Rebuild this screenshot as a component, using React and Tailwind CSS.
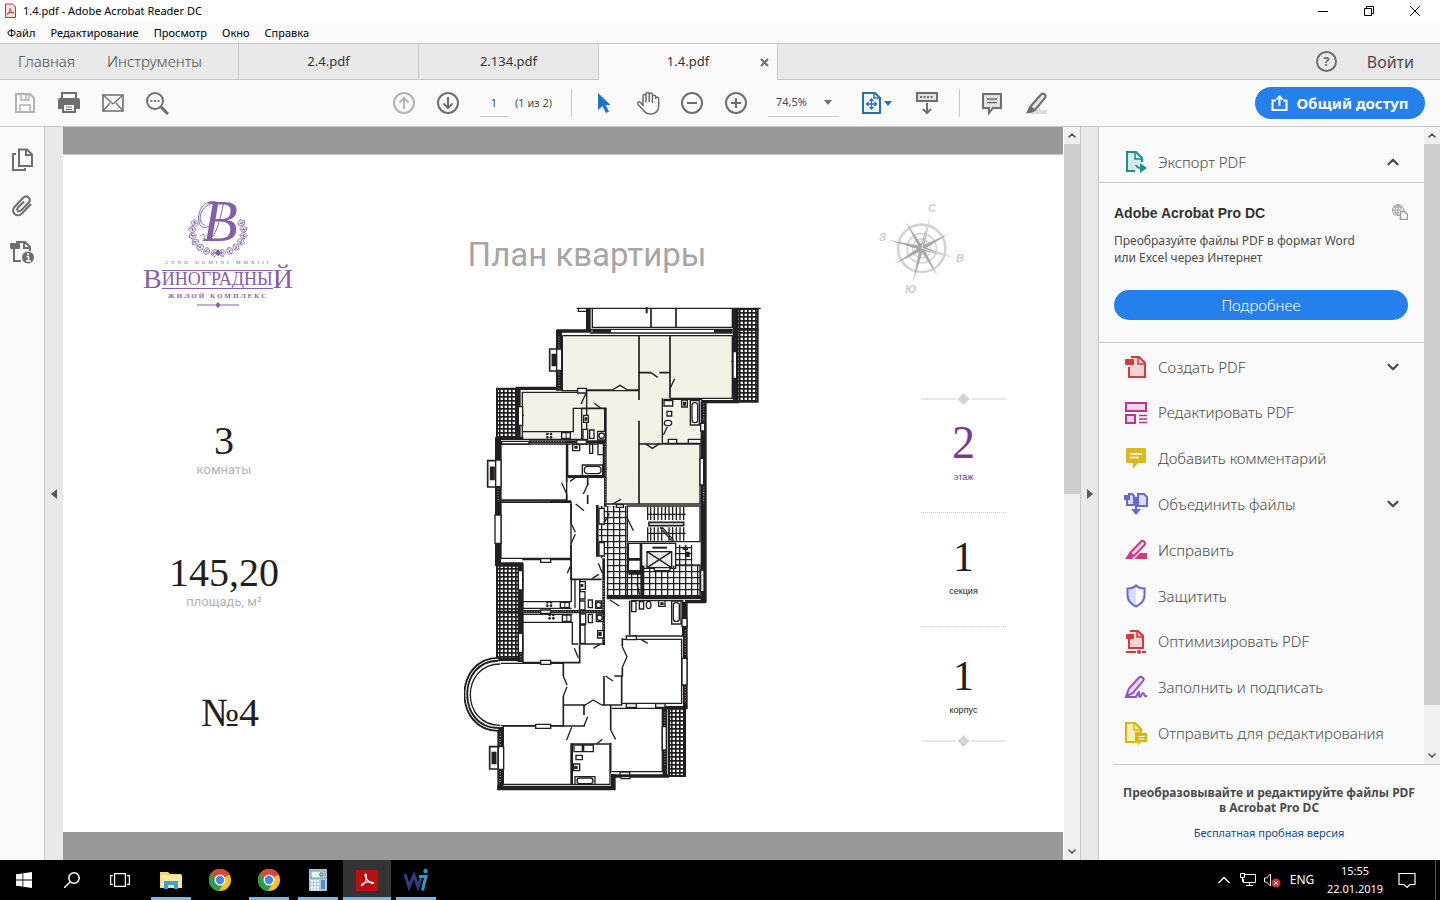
import React, { useState } from 'react';
import { ChevronDown, ChevronUp } from 'lucide-react';

const MENU = ['Файл', 'Редактирование', 'Просмотр', 'Окно', 'Справка'];
const TABS = ['2.4.pdf', '2.134.pdf', '1.4.pdf'];

const INK = '#231f20';

function Icon({ size = 24, children, ...props }) {
  return (
    <svg width={size} height={size} viewBox="0 0 24 24" fill="none" stroke="currentColor" strokeWidth="2" aria-hidden="true" {...props}>
      {children}
    </svg>
  );
}

function ToolButton({ label, className = '', children }) {
  return (
    <button type="button" aria-label={label} className={`flex size-6 shrink-0 items-center justify-center text-[#6e6e6e] ${className}`}>
      {children}
    </button>
  );
}

/* ---------- window chrome ---------- */

function TitleBar() {
  return (
    <header className="flex h-[22px] shrink-0 items-center bg-white pr-0.5 pl-1">
      <svg width="12" height="16" viewBox="0 0 12 16" aria-hidden="true">
        <path d="M1.5 1h7l3 3v10.500h-10z" fill="#fbe3e3" stroke="#c8332f" />
        <path d="M3 11.500c2-1 3.500-4 3-6.500M6 6c.4 2 2 4 4 4M3 11c2-1.600 5-2 7-1.200" fill="none" stroke="#d6302b" />
      </svg>
      <h1 className="ml-[7px] text-[11px] leading-4 text-black">1.4.pdf - Adobe Acrobat Reader DC</h1>
      <div className="ml-auto flex text-black">
        <button type="button" aria-label="Свернуть" className="flex w-[46px] justify-center">
          <svg width="10" height="10" viewBox="0 0 10 10" stroke="currentColor"><path d="M0 5.500h10" /></svg>
        </button>
        <button type="button" aria-label="Восстановить" className="flex w-[46px] justify-center">
          <svg width="10" height="10" viewBox="0 0 10 10" fill="none" stroke="currentColor"><path d="M.5 2.500h7v7h-7zM2.500 2V.5h7v7H8" /></svg>
        </button>
        <button type="button" aria-label="Закрыть" className="flex w-[46px] justify-center">
          <svg width="10" height="10" viewBox="0 0 10 10" stroke="currentColor"><path d="M0 0l10 10M10 0L0 10" /></svg>
        </button>
      </div>
    </header>
  );
}

function MenuBar() {
  return (
    <nav className="flex h-[21px] shrink-0 items-center gap-[15px] bg-[#fafafa] px-[7px]">
      {MENU.map((item) => (
        <button key={item} type="button" className="text-[11px] leading-4 text-black">{item}</button>
      ))}
    </nav>
  );
}

function TabBar() {
  return (
    <div className="flex h-[37px] shrink-0 border-y border-[#c8c8c8] bg-[#e9e9e9] text-[#4b4b4b]">
      <div className="flex w-[238px] items-center gap-8 pl-[18px] text-[15px] font-light">
        <button type="button">Главная</button>
        <button type="button">Инструменты</button>
      </div>
      {TABS.map((tab, i) => {
        const active = i === TABS.length - 1;
        return (
          <div
            key={tab}
            className={`relative flex w-[180px] items-center justify-center border-l border-[#c8c8c8] text-[13px] text-[#323232] ${active ? '-mb-px border-r bg-[#fafafa]' : ''}`}
          >
            <button type="button">{tab}</button>
            {active && (
              <button type="button" aria-label="Закрыть вкладку" className="absolute right-2 text-[#6e6e6e]">
                <svg width="9" height="9" viewBox="0 0 9 9" stroke="currentColor" strokeWidth="2"><path d="M1 1l7 7M8 1L1 8" /></svg>
              </button>
            )}
          </div>
        );
      })}
      <div className="ml-auto flex items-center gap-[30px] pr-[26px]">
        <button type="button" aria-label="Справка" className="flex size-[21px] items-center justify-center rounded-full border-2 border-[#6e6e6e] text-[13px] font-bold text-[#6e6e6e]">?</button>
        <button type="button" className="text-[16px]">Войти</button>
      </div>
    </div>
  );
}

function Toolbar() {
  const [page, setPage] = useState('1');
  return (
    <div className="grid h-[47px] shrink-0 grid-cols-[1fr_auto_1fr] items-center border-b border-[#c8c8c8] bg-[#fafafa] text-[#4b4b4b]">
      <div className="flex gap-5 pl-[13px]">
        <ToolButton label="Сохранить" className="opacity-50">
          <Icon><path d="M3 3h14l4 4v14H3z" /><path d="M8 3v6h8V3M13 4v4M7 21v-7h10v7" strokeWidth="1.500" /></Icon>
        </ToolButton>
        <ToolButton label="Печать">
          <Icon>
            <path d="M5 8V2h14v6" />
            <path d="M1 9a2 2 0 012-2h18a2 2 0 012 2v9h-4v-4H5v4H1z" fill="currentColor" stroke="none" />
            <path d="M6 14v7h12v-7" /><path d="M9 16h6M9 18.500h6" strokeWidth="1" />
          </Icon>
        </ToolButton>
        <ToolButton label="Отправить по почте">
          <Icon><path d="M2 4h20v16H2z" strokeWidth="1.600" /><path d="M2 4l10 9 10-9M2 20l7-8M22 20l-7-8" strokeWidth="1.300" /></Icon>
        </ToolButton>
        <ToolButton label="Найти">
          <Icon><circle cx="10" cy="10" r="8" /><path d="M16 16l7 7" strokeWidth="3" /><path d="M5.500 10h2M9 10h2M12.500 10h2" /></Icon>
        </ToolButton>
      </div>

      <div className="flex items-center gap-5">
        <ToolButton label="Предыдущая страница" className="opacity-50">
          <Icon><circle cx="12" cy="12" r="10" /><path d="M12 18V7M7.500 11.500L12 7l4.500 4.500" /></Icon>
        </ToolButton>
        <ToolButton label="Следующая страница">
          <Icon><circle cx="12" cy="12" r="10" /><path d="M12 6v11M7.500 12.500L12 17l4.500-4.500" /></Icon>
        </ToolButton>
        <div className="flex w-[71px] items-center gap-[7px] text-[11px] whitespace-nowrap">
          <input
            aria-label="Номер страницы"
            value={page}
            onChange={(e) => setPage(e.target.value)}
            className="h-[27px] w-7 shrink-0 border-b border-[#c8c8c8] bg-transparent text-center outline-none"
          />
          <span>(1 из 2)</span>
        </div>
        <span className="h-7 w-px bg-[#c8c8c8]" />
        <ToolButton label="Выделение">
          <Icon stroke="none"><path d="M6 2v17l4.500-4 3.500 7 3-1.500-3.500-6.500h5z" fill="#1f72c9" /></Icon>
        </ToolButton>
        <ToolButton label="Рука">
          <Icon strokeWidth="1.500" strokeLinejoin="round">
            <path d="M7 15V5a1.500 1.500 0 013 0v6.500M10 11V3a1.600 1.600 0 013.200 0v8M13.200 11V3.500a1.600 1.600 0 013.200 0V12M16.400 12V6a1.600 1.600 0 013.300 0v-.5 2a1.500 1.500 0 013 .5v7c0 5-3.500 8-8 8-4 0-6-1.500-8-4.500L2 13.500c-1-2 .8-3.500 2.500-2L7 14.500" />
          </Icon>
        </ToolButton>
        <ToolButton label="Уменьшить">
          <Icon><circle cx="12" cy="12" r="10" /><path d="M7 12h10" /></Icon>
        </ToolButton>
        <ToolButton label="Увеличить">
          <Icon><circle cx="12" cy="12" r="10" /><path d="M7 12h10M12 7v10" /></Icon>
        </ToolButton>
        <div className="flex h-[27px] w-[71px] items-center border-b border-[#c8c8c8] pr-[7px] pl-2">
          <select aria-label="Масштаб" defaultValue="74,5%" className="w-full appearance-none bg-transparent text-[11px] outline-none">
            <option>74,5%</option>
            <option>100%</option>
          </select>
          <svg width="8" height="5" viewBox="0 0 8 5" className="shrink-0" fill="#6e6e6e"><path d="M0 0h8L4 5z" /></svg>
        </div>
        <button type="button" aria-label="По размеру страницы" className="flex w-9 items-center gap-px text-[#1f72b8]">
          <Icon>
            <path d="M4 2h12l5 5v15H4z" /><path d="M15 2v5h6" strokeWidth="1.500" />
            <path d="M12.500 8v10M7.500 13h10M10.500 10l2-2 2 2M10.500 16l2 2 2-2M9.500 11l-2 2 2 2M15.500 11l2 2-2 2" strokeWidth="1.300" />
          </Icon>
          <svg width="8" height="5" viewBox="0 0 8 5" fill="currentColor"><path d="M0 0h8L4 5z" /></svg>
        </button>
        <ToolButton label="Панель инструментов">
          <Icon><path d="M2 2h20v8H2z" fill="#e2e2e2" /><path d="M5 6h14" strokeDasharray="2 1.500" /><path d="M12 12v10M8 18l4 4 4-4" /></Icon>
        </ToolButton>
        <span className="h-7 w-px bg-[#c8c8c8]" />
        <ToolButton label="Комментарий">
          <Icon><path d="M3 3h18v14h-8l-4 5v-5H3z" fill="#e2e2e2" /><path d="M7 8h10M7 11.500h10" strokeWidth="1.300" /></Icon>
        </ToolButton>
        <ToolButton label="Выделить текст">
          <Icon>
            <path d="M9 19h14v4H5z" fill="#dcdcdc" stroke="none" />
            <path d="M6 16L17 3.500c2-2 6 0 4 3.500L11 19z" fill="#e2e2e2" />
            <path d="M5 16l6 4-3 1.500-6 1z" fill="currentColor" stroke="none" />
          </Icon>
        </ToolButton>
      </div>

      <div className="flex justify-end pr-[15px]">
        <button type="button" className="flex h-8 w-[170px] items-center justify-center gap-2 rounded-full bg-[#2680eb] text-[15px] font-bold whitespace-nowrap text-white">
          <svg width="17" height="17" viewBox="0 0 17 17" fill="none" stroke="currentColor" strokeWidth="2" aria-hidden="true">
            <path d="M5 5.500H1.500V15h14V5.500H12M8.500 11V2M5.500 4.500l3-3 3 3" />
          </svg>
          Общий доступ
        </button>
      </div>
    </div>
  );
}

function LeftRail() {
  return (
    <aside className="flex shrink-0 border-r border-[#c8c8c8] bg-[#fafafa]">
      <div className="flex w-11 flex-col items-center gap-[22px] pt-[21px]">
        <ToolButton label="Миниатюры страниц">
          <Icon><path d="M9 1.500h8l5 5V18H9z" /><path d="M16 1.500V7h6M6 6H3v16h12v-2" /></Icon>
        </ToolButton>
        <ToolButton label="Вложения">
          <Icon><path d="M21 10l-9 9.500c-5 5-12-1.500-7.500-6.500L13 4c4-4 9 1 5.500 5L11 16.500c-2.500 2-5-.5-3-3l6-6" /></Icon>
        </ToolButton>
        <ToolButton label="Сведения">
          <Icon>
            <path d="M4 9v12h7M6 2h9l5 5v4M14 2v6h6" />
            <rect x="0" y="3" width="10" height="6" rx="1" fill="currentColor" stroke="none" />
            <circle cx="18" cy="17.500" r="6" fill="currentColor" stroke="none" />
            <path d="M16.500 16.500h2v4.500M16 21h5M18 13v2" stroke="#fff" strokeWidth="1.500" />
          </Icon>
        </ToolButton>
      </div>
    </aside>
  );
}

function CollapseStrip({ label, side }) {
  return (
    <button type="button" aria-label={label} className={`flex shrink-0 items-center justify-center bg-[#e9e9e9] ${side === 'right' ? 'w-[19px] border-x border-[#c8c8c8]' : 'w-[18px]'}`}>
      <svg width="6" height="10" viewBox="0 0 6 10" fill="#5a5a5a">
        <path d={side === 'right' ? 'M0 0l6 5-6 5z' : 'M6 0L0 5l6 5z'} />
      </svg>
    </button>
  );
}

function ScrollBar({ thumb }) {
  return (
    <div className="flex w-4 shrink-0 flex-col items-center bg-[#f0f0f0] text-[#505050]">
      <ChevronUp size={12} strokeWidth={3} className="my-[2px] h-[13px] shrink-0" />
      <div className="min-h-0 flex-1 self-stretch">
        <div className="bg-[#cdcdcd]" style={{ height: thumb }} />
      </div>
      <ChevronDown size={12} strokeWidth={3} className="my-[2px] h-[13px] shrink-0" />
    </div>
  );
}

/* ---------- document page ---------- */

const LEAVES = Array.from({ length: 14 }, (_, i) => {
  const turn = -25 + i * 17.7;
  const a = (turn * Math.PI) / 180;
  return { x: 264 + Math.cos(a) * 78, y: 110 + Math.sin(a) * 64, turn };
});

function Logo() {
  return (
    <div className="mr-3 flex w-[152px] flex-col items-center font-['Liberation_Serif',serif] text-[#8560a8]">
      <svg width="62" height="76" viewBox="171 -40 186 228" fill="none" stroke="currentColor" aria-hidden="true">
        <text x="216" y="138" fontSize="176" fontStyle="italic" fill="currentColor" stroke="none" fontFamily="Liberation Serif, serif">В</text>
        <path d="M212 122c6-10 18-2 10 8 22 14 42-20 58-104M266 24c-34-20-70 20-58 60 8 22 32 14 44-10M250 22c-50 16-46 66-24 68" strokeWidth="3" />
        {LEAVES.map((leaf) => (
          <g key={leaf.turn} transform={`translate(${leaf.x} ${leaf.y}) rotate(${leaf.turn})`} strokeWidth="2.500">
            <path d="M-11 0c2-11 9-6 11-11 5 4 6 8 11 8-4 4-2 10-8 11-5-2-9 2-14-8zM-8 0l14 1M-2-6l4 12" />
          </g>
        ))}
        <path d="M264 162l9 10-9 10-9-10z" fill="currentColor" />
      </svg>
      <span className="text-[5px] leading-[9px] tracking-[3px]">ANNO DOMINI MMXIII</span>
      <div className="flex h-6 items-center leading-6 whitespace-nowrap">
        <span className="text-[28px]">В</span>
        <span className="flex h-[19px] items-center border-y border-current text-[18px]">ИНОГРАДНЫ</span>
        <span className="text-[28px]">Й</span>
      </div>
      <span className="text-[7px] leading-[11px] font-bold tracking-[2px]">ЖИЛОЙ КОМПЛЕКС</span>
      <svg width="42" height="6" viewBox="0 0 42 6" fill="currentColor"><path d="M0 2.500h18v1H0zM24 2.500h18v1H24zM21 0l3 3-3 3-3-3z" /></svg>
    </div>
  );
}

function Compass() {
  return (
    <svg width="88" height="96" viewBox="55 32 264 288" fill="none" stroke="#d4d4d4" role="img" aria-label="Стороны света">
      <circle cx="186" cy="174" r="71" strokeWidth="8" />
      <circle cx="186" cy="174" r="44" strokeWidth="5" />
      <circle cx="186" cy="174" r="28" strokeWidth="4" />
      <g fill="#a8a8a8" stroke="none">
        <path d="M213 76l-21 99-12-2zM160 274l20-101 12 2zM84 148l103 20-2 12zM286 203l-101-23 2-12z" />
        <path d="M138 94l53 77-10 6zM234 257l-53-80 10-6zM267 130l-78 50-6-12zM105 221l78-53 6 12z" />
      </g>
      <path d="M213 76l-27 98 100 29" stroke="#fff" strokeWidth="2" />
      <g fill="#cccccc" stroke="none" fontFamily="Liberation Sans, sans-serif" fontWeight="bold" fontStyle="italic" fontSize="33">
        <text x="205" y="66">С</text>
        <text x="289" y="215">В</text>
        <text x="136" y="308">Ю</text>
        <text x="58" y="153">З</text>
      </g>
    </svg>
  );
}

// walls of the floor, grouped by stroke width
const WALLS = [
  { w: 18, d: 'M312 90V272M129 412V797M197 790V1086M136 1282V1470M746 305V908' },
  { w: 14, d: 'M190 262V418M400 25V95M691 905V1226M630 1220V1430M841 25V300M127 1464H482M475 1422V1470' },
  { w: 10, d: 'M305 93H410M182 265H320M122 415H205M120 792H204M740 305H852M690 905H752M630 1223H697M475 1428H642M455 893H745M192 935H450M122 1078H204M128 1287H145' },
  { w: 8, d: 'M451 325V620M446 775V1035M222 425H450M427 615V770M412 94H468M777 94H833M350 1330V1455M338 530H450M520 820H556M560 795V890M848 88H910' },
  { w: 5, d: 'M588 27V82M663 27V82M552 107V300M552 362V612M645 107V198M645 198V295M552 218H588M613 218H645M395 270H472M518 270H552M380 325H455M335 432V545M335 582V602M398 530V555M398 585V612M348 612V670M348 735V838H440M375 838V1032H450M202 1088H374V1035M325 1090V1128M325 1188V1278M325 1215H392M440 1215H502M145 1278H390M387 1217V1245M350 1332H467M467 1217V1290M467 1328V1418M447 1128V1215M478 1128H500V1215M502 1015V1040M502 1102V1130M524 902V1005M138 603H348M285 606H350' },
  { w: 4, d: 'M365 25H917M370 25V34H398M412 27V82H832V27M405 88H840M405 99H840M322 107H832V295H645M322 107V272H552M202 277H395V418H202zM202 395H355V325H380V420M395 272V325M622 295V430M625 298H740V415M622 430H740M552 432H735V612H455M138 432H335V600H138zM338 432H445V528H338zM138 607H348V775H138zM202 779H349V905H202M202 925H350M360 838V925M202 943H352M202 967H352V1032H370M202 943V1085M138 1090H325M138 1277H325M145 1278V1453H465V1335M145 1465H470M470 1225H622V1415H470M502 1018H680V1210H502M527 902H683V1008H527M380 325V420M517 618H735V725H517zM517 728V890M560 730H662V805H560zM662 735V795H735V890' },
];

// insulated stretches of the outer walls
const HATCHED = 'M312 110V145M312 215V268M129 565V600M746 310V365M746 560V610M197 1060V1080M136 1300V1335M136 1412V1450M691 990V1070M691 1160V1205M630 1235V1278M630 1352V1400M451 430V610M446 840V930M446 945V1025M230 425H330M205 935H255M290 935H440';

const DOORS =
  'M588 218l20 14M659 236l-14 30M472 270l23-14 23 14M378 312l15-32M418 310l20 15M570 430l22 15 23-15M625 405l12-25M473 612l25-14M320 548l15 34M365 530l-20 14M385 582l15-32M362 612l25 20M348 670l13 27M361 703l-13 28M345 800l-8 20M430 790l12 30M412 835l20-12M465 900l28 18M515 650l20 42M463 640l-15 28M502 1040l14 30-14 32M545 850l10 35M325 1128l11 28M336 1160l-11 28M390 1215l25-15 25 15M398 1250l-11 27M467 1290l15 28M350 1282l-15 38M425 1332l17-14M452 1128l22 15M415 1045l20-12M358 1045l12 28M558 1018l20 12M192 320l12 26-12 4M192 820l12 20-12 4M192 1025l12 5-10 20M843 155l-12 30 12 5M632 1280l-10 30 10 4';

function FloorPlan() {
  return (
    <svg width="300" height="485" viewBox="27 21 900 1455" fill="none" stroke={INK} role="img" aria-label="План квартиры" className="shrink-0">
      <defs>
        <pattern id="balcony" width="12" height="12" patternUnits="userSpaceOnUse">
          <rect width="12" height="12" fill="#fff" stroke="none" />
          <path d="M0 0h12v5H0zM0 0h5v12H0z" fill={INK} stroke="none" />
        </pattern>
        <pattern id="tile" width="18" height="18" patternUnits="userSpaceOnUse" x="6" y="3">
          <rect width="18" height="18" fill="#fff" stroke="none" />
          <path d="M0 0h18v4H0zM0 0h4v18H0z" fill={INK} stroke="none" />
        </pattern>
      </defs>

      {/* highlighted flat */}
      <path d="M322 107H832V295H740V430H735V612H455V420H202V277H322z" fill="#f4f1e6" stroke="none" />

      <g strokeWidth="6">
        <path d="M126 266H186V415H126zM848 27H908V305H848zM126 797H192V1076H126zM126 935H192M642 1225H690V1428H642z" fill="url(#balcony)" />
      </g>
      <path d="M432 618H515V797H735V890H455V775H432z" fill="url(#tile)" stroke="none" />
      <path d="M662 735H712V797H662z" fill="url(#tile)" stroke="none" />

      {WALLS.map((wall) => (
        <path key={wall.w} d={wall.d} strokeWidth={wall.w} />
      ))}
      <path d={HATCHED} stroke="#8a8688" strokeWidth="4" strokeDasharray="3 5" />
      <path d={DOORS} strokeWidth="4" />

      {/* bay window */}
      <path d="M130 1078C0 1078 0 1288 130 1288" strokeWidth="14" />
      <path d="M130 1078C0 1078 0 1288 130 1288" strokeWidth="3" stroke="#fff" />
      <path d="M136 1092C16 1092 16 1276 136 1276" strokeWidth="4" />

      {/* windows and openings */}
      <g fill="#fff" strokeWidth="4">
        <path d="M305 147H320V211H305zM122 480H138V560H122zM120 645H138V730H120zM190 320H203V376H190zM190 812H203V870H190zM190 1000H203V1058H190zM130 1340H146V1408H130zM735 475H746V555H735zM737 370H749V393H737zM737 810H747V875H737zM681 1075H696V1155H681zM681 955H696V980H681zM622 1280H634V1350H622zM834 155H845V235H834z" />
        <path d="M368 265H394V279H368zM365 420H394V432H365zM257 776H287V787H257zM257 930H287V940H257zM257 1081H287V1093H257zM242 1273H287V1285H242zM514 1008H544V1019H514zM514 1211H544V1222H514zM602 1211H630V1222H602zM495 1416H524V1425H495zM498 1430H525V1436H498zM640 418H665V430H640zM700 418H738V430H700zM140 424H222V432H140zM484 614H505V622H484z" />
      </g>
      <g strokeWidth="5">
        <path d="M305 147H284V213H305M122 482H98V561H122M128 1340H104V1407H128" />
        <path d="M292 164H302V196H292zM107 502H117V538H107zM112 1358H122V1390H112z" fill={INK} />
      </g>

      {/* bathroom and kitchen fixtures */}
      <g strokeWidth="4" fill="#fff">
        <path d="M706 302H733V375H706zM680 300H697V321H680zM627 302H653V318H627zM636 334H650V348H636zM386 346H400V367H386zM404 390H417V415H404zM428 394H451V420H428zM384 388H398V418H384zM353 434H374V452H353zM404 432H413V460H404zM429 431H445V464H429zM382 495H443V527H382z" />
        <path d="M374 845H391V868H374zM374 875H390V897H374zM374 903H390V930H374zM400 900H412V923H400zM422 903H440V925H422zM376 942H392V972H376zM376 975H390V1030H376zM400 943H412V968H400zM424 942H445V965H424zM428 992H446V1014H428z" />
        <path d="M650 903H678V972H650zM553 905H566V927H553zM611 902H630V919H611zM530 904H543V935H530zM357 1335H382V1355H357zM386 1335H415V1355H386zM363 1366H382V1379H363zM356 1392H374V1412H356zM360 1430H420V1453H360zM320 398H346V415H320zM316 907H343V923H316zM322 945H348V964H322z" />
        <rect x="711" y="308" width="17" height="60" rx="8" />
        <rect x="388" y="499" width="50" height="22" rx="10" />
        <rect x="655" y="908" width="18" height="56" rx="8" />
        <rect x="366" y="1434" width="48" height="17" rx="8" />
        <ellipse cx="639" cy="369" rx="11" ry="8" />
        <ellipse cx="581" cy="915" rx="7" ry="11" />
        <circle cx="440" cy="407" r="8" />
        <circle cx="431" cy="915" r="8" />
        <circle cx="434" cy="953" r="8" />
      </g>
      <g fill={INK} stroke="none">
        {[[277, 402], [277, 907], [284, 945]].map(([x, y]) => (
          <g key={y}>
            <circle cx={x} cy={y} r="4" />
            <circle cx={x + 11} cy={y} r="4" />
            <circle cx={x} cy={y + 10} r="4" />
            <circle cx={x + 11} cy={y + 10} r="4" />
          </g>
        ))}
        <path d="M684 305h9v12h-9zM389 352h8v10h-8zM358 438h10v8h-10zM376 852h9v9h-9zM430 996h10v12h-10zM616 907h10v8h-10zM358 1398h10v9h-10zM332 398h3v17h-3zM328 907h3v16h-3zM334 945h3v19h-3zM572 22h6v18h-6zM683 740h16v10h-16zM690 755h14v16h-14z" />
      </g>

      {/* stairs and lift */}
      <path d="M578 620V660M587 620V660M598 620V660M609 620V660M620 620V660M631 620V660M642 620V660M653 620V660M664 620V660M675 620V660M686 620V660M578 682V722M587 682V722M598 682V722M609 682V722M620 682V722M642 682V722M653 682V722M664 682V722M675 682V722M686 682V722M578 643H692M578 700H692M615 682L650 722M622 682L657 722" strokeWidth="4" />
      <path d="M582 667H686V677H582z" fill="#fff" strokeWidth="5" />
      <path d="M576 755H650V803H576zM576 755L650 803M650 755L576 803" fill="#eee" strokeWidth="4" />
      <path d="M592 743H636" strokeWidth="6" />
      <path d="M520 730H556V776H520zM520 780H556V812H520z" fill="#fff" strokeWidth="4" />
      <path d="M598 803H645V812H598zM432 625H448V672H432zM432 728H448V768H432z" fill="#fff" strokeWidth="4" />
    </svg>
  );
}

function Ornament() {
  return (
    <svg width="85" height="12" viewBox="0 0 85 12" className="-my-1.5" fill="#d4d4d4" aria-hidden="true">
      <path d="M0 5.500h35v1H0zM50 5.500h35v1H50zM42.500 0l6 6-6 6-6-6z" />
    </svg>
  );
}

function RoomStat({ value, label }) {
  return (
    <div className="text-center">
      <p className="font-['Liberation_Serif',serif] text-[40px] leading-10 text-[#231f20]">{value}</p>
      {label && <p className="mt-px font-['Roboto',sans-serif] text-[13px] leading-4 text-[#b4b4b4]">{label}</p>}
    </div>
  );
}

function PlaceStat({ value, label, className }) {
  return (
    <div className={`flex h-[114px] flex-col items-center justify-center font-['Liberation_Serif',serif] ${className}`}>
      <p className="leading-10">{value}</p>
      <p className="mt-2 font-['Liberation_Sans',sans-serif] text-[9px] leading-3">{label}</p>
    </div>
  );
}

function DocumentPage() {
  return (
    <main className="flex min-w-0 flex-1 flex-col bg-[#999999]">
      <article className="mt-[27px] mb-7 grid min-h-0 flex-1 grid-cols-[322fr_404fr_274fr] overflow-hidden border-t border-[#c8c8c8] bg-white">
        <section className="flex flex-col items-center pt-[27px]">
          <Logo />
          <div className="mt-[113px] flex flex-col gap-[75px]">
            <RoomStat value="3" label="комнаты" />
            <RoomStat value="145,20" label="площадь, м²" />
            <div className="pt-2 pl-3"><RoomStat value="№4" /></div>
          </div>
        </section>

        <section className="flex flex-col">
          <h2 className="mt-[76px] text-center font-['Roboto',sans-serif] text-[33px] leading-[48px] text-[#a6a6a6]">План квартиры</h2>
          <div className="mt-[28px] pl-[79px]"><FloorPlan /></div>
        </section>

        <section className="flex flex-col items-start pt-[46px]">
          <div className="pl-[89px]"><Compass /></div>
          <div className="ml-[132px] flex w-[85px] flex-col pt-[102px]">
            <Ornament />
            <PlaceStat value="2" label="этаж" className="border-b border-dotted border-[#c8c8c8] pb-1.5 text-[46px] text-[#7a3a94]" />
            <PlaceStat value="1" label="секция" className="border-b border-dotted border-[#c8c8c8] pb-1.5 text-[42px] text-[#231f20]" />
            <PlaceStat value="1" label="корпус" className="pt-1 text-[42px] text-[#231f20]" />
            <Ornament />
          </div>
        </section>
      </article>
    </main>
  );
}

/* ---------- tools panel ---------- */

const TOOLS = [
  {
    label: 'Создать PDF', color: 'text-[#d7373f]', more: true,
    icon: <><path d="M5 12v10h16V8l-6-6H7" fill="#f6d4d4" /><path d="M14 2v7h7" strokeWidth="1.500" /><rect x="1" y="4" width="9" height="6" rx="1" fill="currentColor" stroke="none" /></>,
  },
  {
    label: 'Редактировать PDF', color: 'text-[#b83787]',
    icon: <><path d="M2 2h20v8H2zM2 14h9v8H2z" fill="#fbd3ec" /><path d="M15 14.500h8M15 18h8M15 21.500h8" strokeWidth="1.300" /></>,
  },
  {
    label: 'Добавить комментарий', color: 'text-[#dbb81c]',
    icon: <><path d="M3 2h18a1 1 0 011 1v13a1 1 0 01-1 1h-7l-5 6v-6H3a1 1 0 01-1-1V3a1 1 0 011-1z" fill="currentColor" stroke="none" /><path d="M6 8h12M6 11.500h9" stroke="#fff" strokeWidth="1.500" /></>,
  },
  {
    label: 'Объединить файлы', color: 'text-[#6767d8]', more: true,
    icon: <><path d="M3 8v5h7V4L8 2H4M14 2h6l3 3v9h-9zM14 7v7" fill="#dcdcfa" /><rect x="0" y="3" width="6" height="5" fill="currentColor" stroke="none" /><path d="M12 5v12" /><path d="M7 17h10l-5 6z" fill="currentColor" stroke="none" /></>,
  },
  {
    label: 'Исправить', color: 'text-[#cf3a83]',
    icon: <><path d="M6 15L17 3.500c2-2 5 1 3.500 3.500L10 18z" fill="#fbd3ec" /><path d="M1 21l4-6 5 4-2 2zM10 21l6-6h7v6z" fill="currentColor" stroke="none" /></>,
  },
  {
    label: 'Защитить', color: 'text-[#6767d8]',
    icon: <><path d="M12 2v20c-6-3-8.500-7-8.500-11V5C7 5 9.500 4 12 2z" fill="#dcdcfa" stroke="none" /><path d="M12 1.500C9.500 4 7 4.500 3.500 4.500V11c0 5 3 9 8.500 11.500 5.500-2.500 8.500-6.500 8.500-11.500V4.500c-3.500 0-6-.5-8.500-3z" /></>,
  },
  {
    label: 'Оптимизировать PDF', color: 'text-[#d7373f]',
    icon: <><path d="M5 9v9h14V6l-5-5H6" fill="#f6d4d4" /><path d="M13 1v6h6" strokeWidth="1.500" /><rect x="2" y="4" width="8" height="5" rx="1" fill="currentColor" stroke="none" /><path d="M2 22h10M18 22h4" /><circle cx="15" cy="22" r="2" fill="currentColor" stroke="none" /></>,
  },
  {
    label: 'Заполнить и подписать', color: 'text-[#8e55c7]',
    icon: <><path d="M2 21.500l3-8L15 2.500c2-2 6 1 4 3.500L9 18z" fill="#ead9fa" /><path d="M1 22h11c1-2 2-5 3-5s-1 5 1 5 1-4 3-4 0 4 4 3" /></>,
  },
  {
    label: 'Отправить для редактирования', color: 'text-[#d6b800]',
    icon: <><path d="M12 21H2V2h9l6 6v4H12z" fill="#f7efbd" /><path d="M10 2v7h7" strokeWidth="1.500" /><path d="M12 12h11v9h-6l-3 3v-3h-2z" fill="currentColor" stroke="none" /><path d="M14.500 15.500h6M14.500 18h6" stroke="#fff" strokeWidth="1.200" /></>,
  },
];

function ToolsPanel() {
  return (
    <aside className="flex w-[341px] shrink-0 flex-col bg-[#fafafa] text-[#4b4b4b]">
      <div className="flex min-h-0 flex-1">
        <div className="flex min-w-0 flex-1 flex-col">
          <button type="button" className="flex h-14 shrink-0 items-center border-b border-[#c8c8c8] pt-[15px] pr-[23px] pl-[25px] text-[15px] font-light">
            <Icon className="mr-[10px] text-[#1f8f8b]">
              <path d="M11 21H3V2h9l6 6v4" fill="#d3ecea" /><path d="M11 2v7h7" strokeWidth="1.500" />
              <path d="M12 15c1 3 3 3 5 3" /><path d="M16 13l7 5-7 5z" fill="currentColor" stroke="none" />
            </Icon>
            Экспорт PDF
            <ChevronUp size={18} strokeWidth={3} className="-mr-px ml-auto" />
          </button>

          <section className="h-40 shrink-0 border-b border-[#c8c8c8] pt-[21px] pr-4 pl-[15px]">
            <div className="flex items-start justify-between">
              <h2 className="font-['Liberation_Sans',sans-serif] text-[14px] leading-[18px] font-bold text-[#323232]">Adobe Acrobat Pro DC</h2>
              <svg width="16" height="16" viewBox="0 0 16 16" fill="none" stroke="#9a9a9a" aria-hidden="true">
                <circle cx="6" cy="6" r="5.500" /><path d="M.5 6h8M6 .5v10M2 3h8M2 9h5M6 .5c-4 4-4 7 0 11M6 .5c2 2 3 3 3 5" />
                <path d="M8.500 7.500h4l3 3v5h-7z" fill="#fafafa" strokeWidth="1.500" />
              </svg>
            </div>
            <p className="mt-[10px] text-[12px] leading-[17px]">
              Преобразуйте файлы PDF в формат Word<br />или Excel через Интернет
            </p>
            <button type="button" className="mt-6 h-[30px] w-full rounded-full bg-[#2680eb] text-[15px] font-light text-white">Подробнее</button>
          </section>

          <ul className="flex min-h-0 flex-1 flex-col pt-px pb-2">
            {TOOLS.map((tool) => (
              <li key={tool.label} className="flex min-h-0 flex-1">
                <button type="button" className="flex w-full items-center pr-[23px] pl-[25px] text-[15px] font-light whitespace-nowrap">
                  <Icon className={`mr-[10px] shrink-0 ${tool.color}`}>{tool.icon}</Icon>
                  {tool.label}
                  {tool.more && <ChevronDown size={18} strokeWidth={3} className="-mr-px ml-auto" />}
                </button>
              </li>
            ))}
          </ul>
        </div>
        <ScrollBar thumb="93%" />
      </div>

      <footer className="ml-[15px] flex h-24 shrink-0 flex-col items-center border-t border-[#c8c8c8] pt-5 pr-4 text-center">
        <p className="text-[12px] leading-[15px] font-bold whitespace-nowrap">
          Преобразовывайте и редактируйте файлы PDF<br />в Acrobat Pro DC
        </p>
        <a href="#trial" className="mt-[10px] text-[11px] leading-4 text-[#0d4f8b]">Бесплатная пробная версия</a>
      </footer>
    </aside>
  );
}

/* ---------- taskbar ---------- */

function Chrome() {
  return (
    <svg width="22" height="22" viewBox="0 0 22 22" aria-hidden="true">
      <circle cx="11" cy="11" r="11" fill="#fbc116" />
      <path d="M11 11L1.500 5.500A11 11 0 0120.500 5.500z" fill="#d8493a" />
      <path d="M1.500 5.500A11 11 0 0010 22l5-8.500-4-2.500z" fill="#2c9e4b" />
      <path d="M11 5.500h9.500" stroke="#d8493a" />
      <circle cx="11" cy="11" r="5.500" fill="#fff" />
      <circle cx="11" cy="11" r="4.200" fill="#4a86ee" />
    </svg>
  );
}

const APPS = [
  {
    name: 'Проводник', open: true,
    icon: <svg width="22" height="20" viewBox="0 0 22 20"><path d="M0 2h8l2 2h11v14H0z" fill="#f6d673" /><path d="M1 5h21v13H1z" fill="#fde69a" /><path d="M4 19v-8h14v8h-4v-4H8v4z" fill="#3ba3d9" /></svg>,
  },
  { name: 'Chrome', icon: <Chrome /> },
  { name: 'Chrome — второе окно', open: true, icon: <Chrome /> },
  {
    name: 'Калькулятор', open: true,
    icon: (
      <svg width="18" height="22" viewBox="0 0 18 22">
        <rect width="18" height="22" rx="1" fill="#a9cbe3" /><rect x="2" y="2" width="14" height="7" fill="#eaf5e4" stroke="#6c93b4" />
        <path d="M11 4h3v3h-3z" fill="none" stroke="#33607f" />
        <path d="M2 12h9M2 15h9M2 18h9M2 20.500h9" stroke="#fff" strokeWidth="2" strokeDasharray="2 1" /><path d="M12 11h4v9h-4z" fill="#4f91c6" />
      </svg>
    ),
  },
  {
    name: 'Acrobat Reader', open: true, active: true,
    icon: <svg width="22" height="21" viewBox="0 0 22 21"><rect width="22" height="21" rx="1" fill="#b90f0f" /><path d="M5 15.500c1-2.500 6-4.500 12-3M5 15.500c3 .5 6-5 5.500-10-.2-2-1.800-1.500-1.500 0 .5 3 4 7 7 8 2 .5 2-1 1-1" fill="none" stroke="#fff" strokeWidth="1.200" /></svg>,
  },
  {
    name: 'Wi', open: true,
    icon: <svg width="24" height="24" viewBox="0 0 24 24" fill="none" strokeWidth="3"><path d="M1 6l4 13 5-12 4 12 3-9" stroke="#343a80" /><path d="M15 8.500h7c-1 3-2.500 9-3.500 14" stroke="#1ba3c4" /><circle cx="21.500" cy="3" r="2.200" fill="#1ba3c4" /></svg>,
  },
];

function Taskbar() {
  return (
    <footer className="flex h-10 shrink-0 items-stretch bg-black text-white">
      <button type="button" aria-label="Пуск" className="flex w-12 items-center justify-center">
        <svg width="16" height="16" viewBox="0 0 16 16" fill="#fff"><path d="M0 2.300l6.500-.9v6.200H0zM7.300 1.300L16 0v7.600H7.300zM0 8.400h6.500v6.200L0 13.700zM7.300 8.400H16V16l-8.700-1.200z" /></svg>
      </button>
      <button type="button" aria-label="Поиск" className="flex w-12 items-center justify-center">
        <svg width="16" height="16" viewBox="0 0 16 16" fill="none" stroke="#fff" strokeWidth="1.500"><circle cx="10" cy="6" r="5.200" /><path d="M6.200 9.800L0 16" /></svg>
      </button>
      <button type="button" aria-label="Представление задач" className="flex w-12 items-center justify-center">
        <svg width="20" height="14" viewBox="0 0 20 14" fill="none" stroke="#fff" strokeWidth="1.200"><path d="M4.600.6h10.800v12.800H4.600zM3 2.600H.6v8.800H3M17 2.600h2.400v8.800H17" /></svg>
      </button>
      <div className="ml-[3px] flex gap-px">
        {APPS.map((app) => (
          <button key={app.name} type="button" aria-label={app.name} className={`flex w-12 flex-col items-center ${app.active ? 'bg-[#333333]' : ''}`}>
            <span className="flex flex-1 items-center pt-[3px]">{app.icon}</span>
            <span className={`h-[3px] ${app.active ? 'w-full' : 'w-10'} ${app.open ? 'bg-[#76b9ed]' : ''}`} />
          </button>
        ))}
      </div>

      <div className="ml-auto flex items-center text-[12px]">
        <button type="button" aria-label="Скрытые значки" className="flex w-6 justify-center">
          <svg width="12" height="8" viewBox="0 0 12 8" fill="none" stroke="#fff" strokeWidth="1.300"><path d="M.5 7L6 1.500 11.500 7" /></svg>
        </button>
        <button type="button" aria-label="Сеть" className="flex w-6 justify-center">
          <svg width="16" height="14" viewBox="0 0 16 14" fill="none" stroke="#fff"><path d="M5 1.500h10.500v8H3.500V6M9.500 9.500v3M6 12.500h7M.5.5h4v4h-4zM2.500 5v4" /></svg>
        </button>
        <button type="button" aria-label="Звук выключен" className="flex w-6 justify-center">
          <svg width="17" height="15" viewBox="0 0 17 15" fill="none" stroke="#fff"><path d="M.5 5h2l4-4v12l-4-4h-2z" /><circle cx="12" cy="10" r="4.500" fill="#d13438" stroke="none" /><path d="M10 8l4 4M14 8l-4 4" /></svg>
        </button>
        <button type="button" className="w-9">ENG</button>
        <button type="button" className="w-[70px] text-[11px] leading-[18px]"><time dateTime="2019-01-22T15:55">15:55<br />22.01.2019</time></button>
        <button type="button" aria-label="Уведомления" className="mr-[19px] ml-2 flex">
          <svg width="18" height="17" viewBox="0 0 18 17" fill="none" stroke="#fff" strokeWidth="1.200"><path d="M1 1.500h16v11h-5l-3 3-3-3H1z" /></svg>
        </button>
        <button type="button" aria-label="Показать рабочий стол" className="h-full w-[5px] border-l border-[#555]" />
      </div>
    </footer>
  );
}

export default function App() {
  return (
    <div className="flex h-screen min-h-[900px] flex-col overflow-hidden bg-[#fafafa] font-['Noto_Sans','Open_Sans',sans-serif]">
      <TitleBar />
      <MenuBar />
      <TabBar />
      <Toolbar />
      <div className="flex min-h-0 flex-1">
        <LeftRail />
        <CollapseStrip label="Показать панель навигации" side="left" />
        <DocumentPage />
        <div className="flex border-l border-white"><ScrollBar thumb="50%" /></div>
        <CollapseStrip label="Скрыть панель инструментов" side="right" />
        <ToolsPanel />
      </div>
      <Taskbar />
    </div>
  );
}
